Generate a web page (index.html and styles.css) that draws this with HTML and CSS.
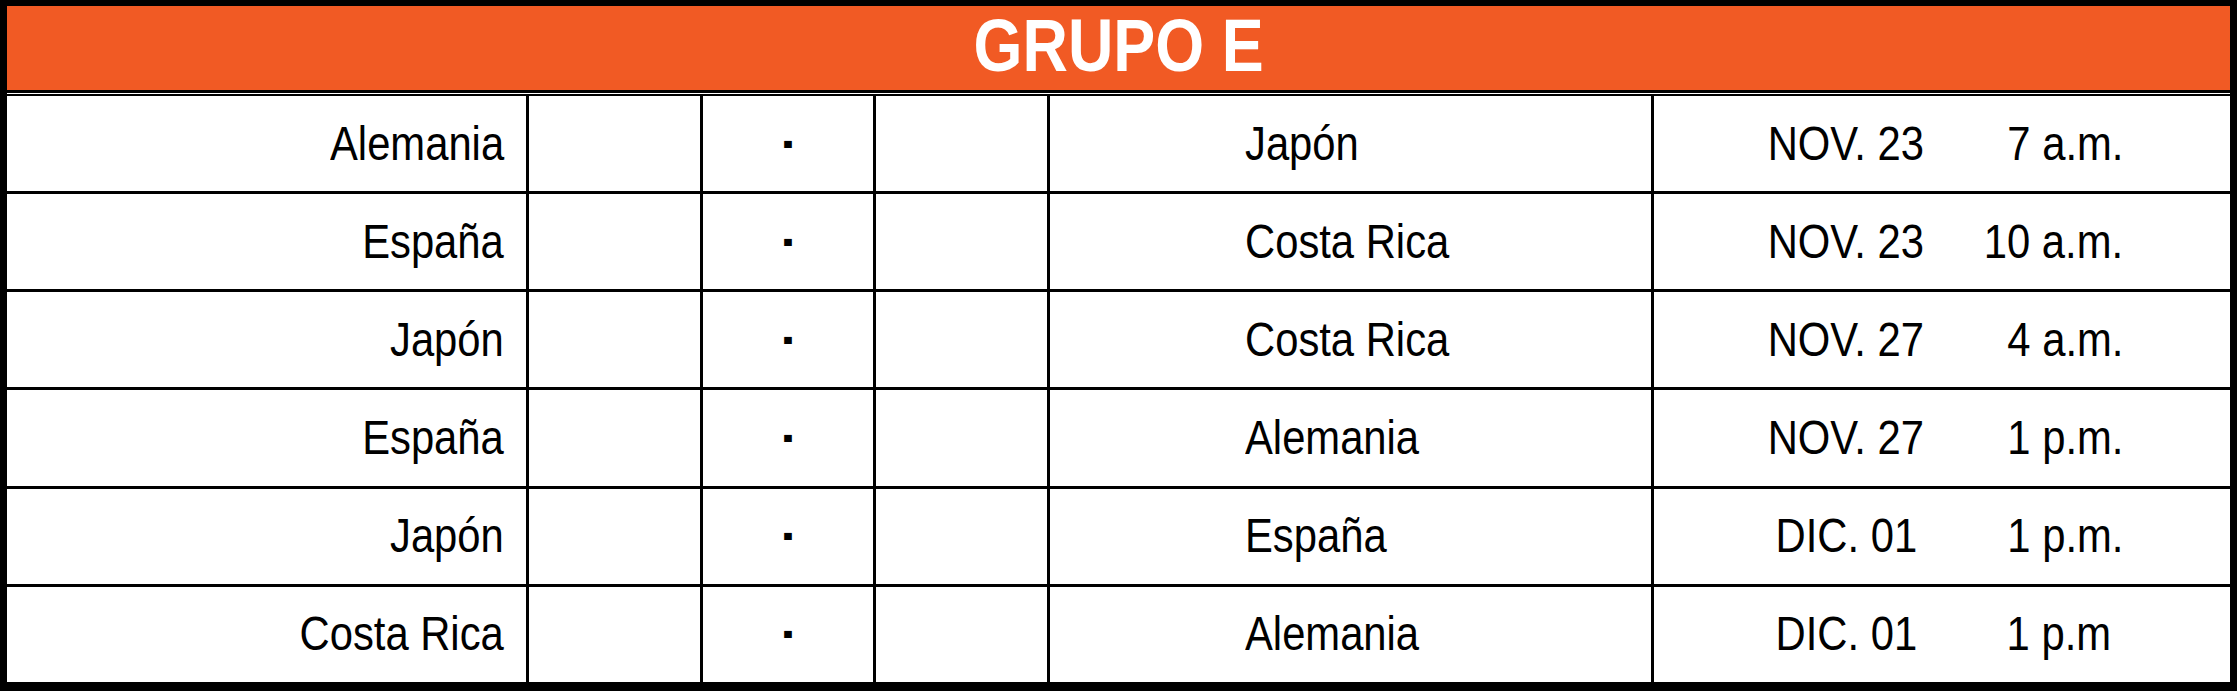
FILE: index.html
```html
<!DOCTYPE html>
<html lang="es">
<head>
<meta charset="utf-8">
<title>Grupo E</title>
<link rel="stylesheet" href="styles.css">
</head>
<body>
<div class="group">
  <div class="group__title"><span class="title-text">GRUPO E</span></div>
  <div class="group__rows">
    <div class="cell cell--home"><span class="txt">Alemania</span></div>
    <div class="cell"></div>
    <div class="cell cell--vs"><span class="dash">-</span></div>
    <div class="cell"></div>
    <div class="cell cell--away"><span class="txt">Japón</span></div>
    <div class="cell cell--when"><span class="date"><span class="txt">NOV. 23</span></span><span class="time"><span class="txt">7 a.m.</span></span></div>

    <div class="cell cell--home"><span class="txt">España</span></div>
    <div class="cell"></div>
    <div class="cell cell--vs"><span class="dash">-</span></div>
    <div class="cell"></div>
    <div class="cell cell--away"><span class="txt">Costa Rica</span></div>
    <div class="cell cell--when"><span class="date"><span class="txt">NOV. 23</span></span><span class="time"><span class="txt">10 a.m.</span></span></div>

    <div class="cell cell--home"><span class="txt">Japón</span></div>
    <div class="cell"></div>
    <div class="cell cell--vs"><span class="dash">-</span></div>
    <div class="cell"></div>
    <div class="cell cell--away"><span class="txt">Costa Rica</span></div>
    <div class="cell cell--when"><span class="date"><span class="txt">NOV. 27</span></span><span class="time"><span class="txt">4 a.m.</span></span></div>

    <div class="cell cell--home"><span class="txt">España</span></div>
    <div class="cell"></div>
    <div class="cell cell--vs"><span class="dash">-</span></div>
    <div class="cell"></div>
    <div class="cell cell--away"><span class="txt">Alemania</span></div>
    <div class="cell cell--when"><span class="date"><span class="txt">NOV. 27</span></span><span class="time"><span class="txt">1 p.m.</span></span></div>

    <div class="cell cell--home"><span class="txt">Japón</span></div>
    <div class="cell"></div>
    <div class="cell cell--vs"><span class="dash">-</span></div>
    <div class="cell"></div>
    <div class="cell cell--away"><span class="txt">España</span></div>
    <div class="cell cell--when"><span class="date"><span class="txt">DIC. 01</span></span><span class="time"><span class="txt">1 p.m.</span></span></div>

    <div class="cell cell--home"><span class="txt">Costa Rica</span></div>
    <div class="cell"></div>
    <div class="cell cell--vs"><span class="dash">-</span></div>
    <div class="cell"></div>
    <div class="cell cell--away"><span class="txt">Alemania</span></div>
    <div class="cell cell--when"><span class="date"><span class="txt">DIC. 01</span></span><span class="time time--short"><span class="txt">1 p.m</span></span></div>
  </div>
</div>
</body>
</html>
```
FILE: styles.css
```css
html, body {
  margin: 0;
  padding: 0;
  background: #ffffff;
}

.group {
  box-sizing: border-box;
  width: 2237px;
  height: 691px;
  background: #000000;
  padding: 6px 7px 9px 7px;
  display: flex;
  flex-direction: column;
  font-family: "Liberation Sans", Arial, sans-serif;
  color: #000000;
}

.group__title {
  height: 84px;
  flex: 0 0 84px;
  background: #f15a24;
  color: #ffffff;
  font-weight: 700;
  font-size: 74px;
  line-height: 1;
  display: flex;
  align-items: center;
  justify-content: center;
  padding-bottom: 4px;
  box-sizing: border-box;
}

.title-text {
  display: inline-block;
  transform: scaleX(0.85);
  transform-origin: center;
}

.group__rows {
  flex: 1 1 auto;
  margin-top: 3px;
  border-top: 1px solid #ffffff;
  padding-top: 2px;
  display: grid;
  grid-template-columns: 519px 171px 170px 171px 601px 576px;
  grid-template-rows: repeat(6, 1fr);
  gap: 3px;
}

.cell {
  background: #ffffff;
  display: flex;
  align-items: center;
  font-size: 48px;
  line-height: 1;
  min-width: 0;
  white-space: nowrap;
}

.txt {
  display: inline-block;
  transform: scaleX(0.87);
}

.cell--home {
  justify-content: flex-end;
  padding-right: 22px;
}

.cell--home .txt {
  transform-origin: right center;
}

.cell--vs {
  justify-content: center;
}

.dash {
  display: inline-block;
  font-size: 60px;
  font-weight: 700;
  transform: translateY(-4px) scaleX(0.5);
  transform-origin: center;
}

.cell--away {
  padding-left: 195px;
}

.cell--away .txt {
  transform-origin: left center;
}

.cell--when {
  padding-left: 82px;
  padding-right: 107px;
}

.date {
  flex: 0 0 220px;
  text-align: center;
}

.date .txt {
  transform-origin: center;
}

.time {
  flex: 1 1 auto;
  text-align: right;
}

.time .txt {
  transform-origin: right center;
}

.time--short {
  padding-right: 12px;
}
```
